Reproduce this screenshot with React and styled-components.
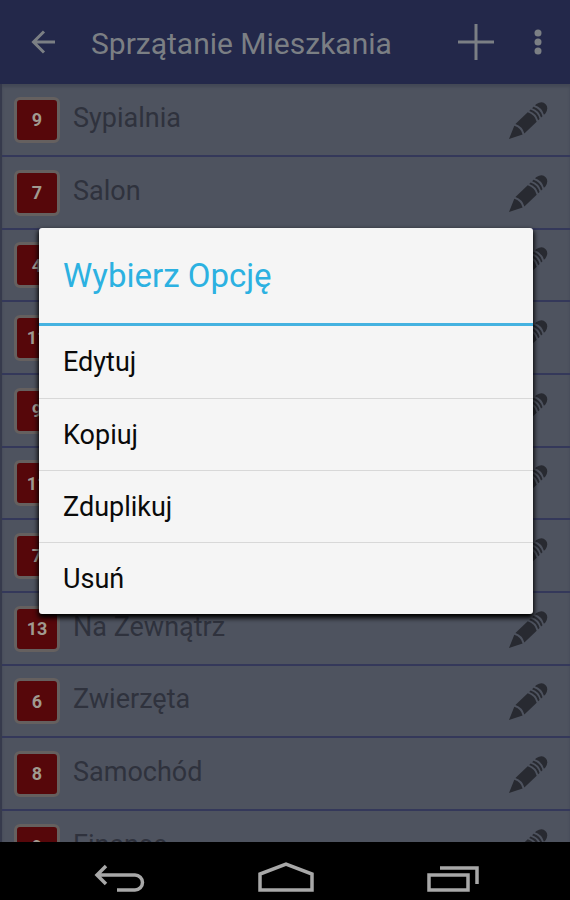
import styled, { createGlobalStyle } from 'styled-components';

const rooms = [
    { name: 'Sypialnia', count: 9 },
    { name: 'Salon', count: 7 },
    { name: '', count: 4 },
    { name: '', count: 11 },
    { name: '', count: 9 },
    { name: '', count: 11 },
    { name: '', count: 7 },
    { name: 'Na Zewnątrz', count: 13 },
    { name: 'Zwierzęta', count: 6 },
    { name: 'Samochód', count: 8 },
    { name: 'Finanse', count: 9 },
];

const options = ['Edytuj', 'Kopiuj', 'Zduplikuj', 'Usuń'];

const ArrowIcon = () => (
    <svg width="24" height="24" viewBox="0 0 24 24" fill="none" stroke="currentColor" strokeWidth="3">
        <path d="M24 12H2M13 1.500L2.500 12L13 22.500" />
    </svg>
);

const PlusIcon = () => (
    <svg width="36" height="36" viewBox="0 0 36 36" fill="none" stroke="currentColor" strokeWidth="3">
        <path d="M18 0v36M0 18h36" />
    </svg>
);

const DotsIcon = () => (
    <svg width="8" height="26" viewBox="0 0 8 26" fill="currentColor">
        <circle cx="4" cy="4" r="3.500" />
        <circle cx="4" cy="13" r="3.500" />
        <circle cx="4" cy="22" r="3.500" />
    </svg>
);

const PencilIcon = () => (
    <svg width="40" height="38" viewBox="0 0 40 38" fill="currentColor">
        <g transform="translate(1 37) rotate(-43.500)">
            <path d="M0 0L13 -6Q16.500 0 13 6Z" />
            <path d="M15 -6.500H32Q35.500 0 32 6.500H15Q18.500 0 15 -6.500Z" />
            <path d="M34 -6.500H36Q39.500 0 36 6.500H34Q37.500 0 34 -6.500Z" />
            <path d="M38 -6.500H40Q43.500 0 40 6.500H38Q41.500 0 38 -6.500Z" />
            <path d="M42 -6.500H44Q50.500 -5 50.500 0T44 6.500H42Q45.500 0 42 -6.500Z" />
        </g>
    </svg>
);

const BackIcon = () => (
    <svg width="52" height="30" viewBox="0 0 52 30" fill="none" stroke="currentColor" strokeWidth="3.500">
        <path d="M12 4L3 13l9 9M3 13h38a7.300 7.300 0 0 1 0 15H23" />
    </svg>
);

const HomeIcon = () => (
    <svg width="56" height="30" viewBox="0 0 56 30" fill="none" stroke="currentColor" strokeWidth="3.500">
        <path d="M2 28V12L28 2l26 10v16Z" />
    </svg>
);

const RecentsIcon = () => (
    <svg width="52" height="30" viewBox="0 0 52 30" fill="none" stroke="currentColor" strokeWidth="3.500">
        <path d="M2 13h39v15H2ZM13 6h37v16" />
    </svg>
);

const App = () => {
    return (
    <>
        <GlobalStyle />
        <Screen>
            <TopBar>
                <BarButton aria-label="Wstecz"><ArrowIcon /></BarButton>
                <Title>Sprzątanie Mieszkania</Title>
                <BarButton aria-label="Dodaj"><PlusIcon /></BarButton>
                <BarButton aria-label="Więcej"><DotsIcon /></BarButton>
            </TopBar>
            <RoomList>
                {rooms.map((room, index) => (
                    <RoomRow key={index}>
                        <Badge>{room.count}</Badge>
                        <RoomName>{room.name}</RoomName>
                        <EditButton aria-label={`Edytuj ${room.name}`}><PencilIcon /></EditButton>
                    </RoomRow>
                ))}
            </RoomList>
            <NavBar>
                <NavButton aria-label="Cofnij"><BackIcon /></NavButton>
                <NavButton aria-label="Ekran główny"><HomeIcon /></NavButton>
                <NavButton aria-label="Ostatnie"><RecentsIcon /></NavButton>
            </NavBar>
            <Overlay>
                <Dialog role="dialog" aria-labelledby="dialog-title">
                    <DialogTitle id="dialog-title">Wybierz Opcję</DialogTitle>
                    {options.map((option) => (
                        <Option key={option}>{option}</Option>
                    ))}
                </Dialog>
            </Overlay>
        </Screen>
    </> );
}

const GlobalStyle = createGlobalStyle`
    * {
        box-sizing: border-box;
    }
    body {
        margin: 0;
        background-color: #000;
        font-family: Roboto, "Liberation Sans", sans-serif;
    }
    button {
        font-family: inherit;
        border: none;
        padding: 0;
        background-color: transparent;
        cursor: pointer;
    }
    svg {
        display: block;
    }
`;

const Screen = styled.div`
    position: relative;
    display: flex;
    flex-direction: column;
    height: 100vh;
`;

const TopBar = styled.header`
    display: flex;
    align-items: center;
    flex-shrink: 0;
    height: 84px;
    padding: 0 28px 0 31px;
    color: #7b7f84;
    background-color: #23284a;
`;

const BarButton = styled.button`
    color: inherit;
`;

const Title = styled.h1`
    flex: 1;
    margin: 0 0 0 36px;
    padding-top: 4px;
    font-size: 30px;
    font-weight: 400;
    line-height: 36px;

    & + ${BarButton} {
        margin-right: 40px;
    }
`;

const RoomList = styled.ul`
    display: grid;
    grid-auto-rows: 73px 73px 72px;
    align-content: start;
    flex: 1;
    min-height: 0;
    margin: 0;
    padding: 0;
    overflow: hidden;
    list-style: none;
    border-left: 2px solid #363a4c;
    background-color: #4e535f;
    box-shadow: inset 0 3px 3px #434856;
`;

const RoomRow = styled.li`
    display: flex;
    align-items: center;
    padding: 0 22px 0 12px;
    border-bottom: 2px solid #34385a;
`;

const Badge = styled.span`
    display: flex;
    align-items: center;
    justify-content: center;
    width: 46px;
    height: 46px;
    border: 3px solid #65605f;
    border-radius: 6px;
    color: #a09a90;
    background-color: #56070a;
    font-size: 18px;
    font-weight: 700;
`;

const RoomName = styled.span`
    flex: 1;
    padding: 0 0 4px 13px;
    color: #2f323d;
    font-size: 27px;
    line-height: 32px;
`;

const EditButton = styled.button`
    padding-top: 2px;
    color: #282a31;
`;

const NavBar = styled.nav`
    display: flex;
    flex-shrink: 0;
    height: 58px;
    padding: 20px 34px 0 37px;
    background-color: #000;
`;

const NavButton = styled.button`
    display: flex;
    flex: 1;
    justify-content: center;
    color: #a8a8a8;
`;

const Overlay = styled.div`
    position: absolute;
    inset: 0 0 58px;
    display: flex;
    align-items: center;
    padding: 0 37px 0 39px;
`;

const Dialog = styled.section`
    display: flex;
    flex: 1;
    flex-direction: column;
    overflow: hidden;
    border-radius: 3px;
    background-color: #f5f5f5;
    box-shadow: 0 3px 5px 1px #000;
`;

const DialogTitle = styled.h2`
    margin: 0;
    padding: 30px 24px 29px;
    border-bottom: 3px solid #45b2e0;
    color: #2cb1e1;
    font-size: 33px;
    font-weight: 400;
    line-height: 36px;
`;

const Option = styled.button`
    height: 72px;
    padding: 0 24px;
    color: #0a0a0a;
    font-size: 27px;
    text-align: left;

    & + & {
        border-top: 1px solid #d8d8d8;
    }
`;

export default App;
